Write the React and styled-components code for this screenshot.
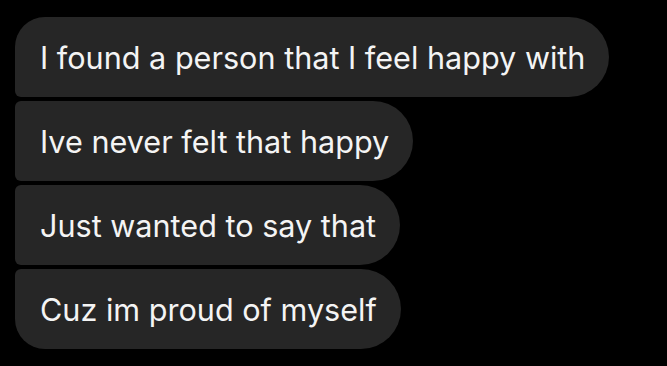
import React from "react";
import styled, { createGlobalStyle } from "styled-components";

const GlobalStyle = createGlobalStyle`
    html, body {
        margin: 0;
        padding: 0;
        background: #000;
    }
    body {
        width: 667px;
        height: 366px;
        overflow: hidden;
    }
`

const Thread = styled.div`
    display: flex;
    flex-direction: column;
    align-items: flex-start;
    gap: 4px;
    padding: 17px 15px;
`

const Bubble = styled.div`
    display: flex;
    align-items: center;
    height: 80px;
    box-sizing: border-box;
    padding: 0 24px 0 25px;
    background: #262626;
    color: #f4f4f4;
    font-family: Inter, "Noto Sans", sans-serif;
    font-size: 30.6px;
    border-radius: ${props => props.first ? "30px" : "6px"} 40px 40px ${props => props.last ? "30px" : "6px"};
`

const messages = [
    "I found a person that I feel happy with",
    "Ive never felt that happy",
    "Just wanted to say that",
    "Cuz im proud of myself"
];

const App = () => {
    return (
        <>
            <GlobalStyle />
            <Thread>
                {messages.map((text, i) => (
                    <Bubble key={i} first={i === 0} last={i === messages.length - 1}>
                        {text}
                    </Bubble>
                ))}
            </Thread>
        </>
    )
}

export default App;
